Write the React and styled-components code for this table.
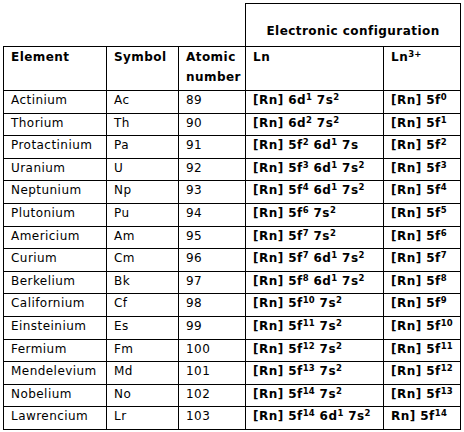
import React from "react";
import styled, { createGlobalStyle } from "styled-components";

const GlobalStyle = createGlobalStyle`
  body {
    margin: 0;
    background: #ffffff;
  }
`;

const Page = styled.div`
  padding: 3px;
  font-family: "DejaVu Sans", Verdana, sans-serif;
  font-size: 12px;
  letter-spacing: 0.45px;
  color: #000;
`;

const Table = styled.table`
  width: 458px;
  table-layout: fixed;
  border-collapse: collapse;
`;

const TopRow = styled.tr`
  height: 43px;
`;

const HeadRow = styled.tr`
  height: 44px;
`;

const Row = styled.tr`
  height: 22.6px;
`;

const Blank = styled.td`
  border: none;
  padding: 0;
`;

const GroupHead = styled.th`
  border: 1px solid #000;
  padding: 0 0 6px;
  text-align: center;
  vertical-align: bottom;
  font-weight: bold;
  line-height: 17px;
`;

const Head = styled.th`
  border: 1px solid #000;
  padding: 0 7px;
  text-align: left;
  vertical-align: top;
  font-weight: bold;
  line-height: 20px;
`;

const Cell = styled.td`
  border: 1px solid #000;
  padding: 1px 7px 0;
  vertical-align: top;
  line-height: 17px;
  white-space: nowrap;
  font-weight: ${(p) => (p.$bold ? "bold" : "normal")};
`;

const Sup = styled.sup`
  font-size: 8.5px;
  line-height: 0;
  vertical-align: 4px;
  letter-spacing: 0.2px;
`;

const rows = [
  ["Actinium", "Ac", 89, "[Rn] 6d1 7s2", "[Rn] 5f0"],
  ["Thorium", "Th", 90, "[Rn] 6d2 7s2", "[Rn] 5f1"],
  ["Protactinium", "Pa", 91, "[Rn] 5f2 6d1 7s", "[Rn] 5f2"],
  ["Uranium", "U", 92, "[Rn] 5f3 6d1 7s2", "[Rn] 5f3"],
  ["Neptunium", "Np", 93, "[Rn] 5f4 6d1 7s2", "[Rn] 5f4"],
  ["Plutonium", "Pu", 94, "[Rn] 5f6 7s2", "[Rn] 5f5"],
  ["Americium", "Am", 95, "[Rn] 5f7 7s2", "[Rn] 5f6"],
  ["Curium", "Cm", 96, "[Rn] 5f7 6d1 7s2", "[Rn] 5f7"],
  ["Berkelium", "Bk", 97, "[Rn] 5f8 6d1 7s2", "[Rn] 5f8"],
  ["Californium", "Cf", 98, "[Rn] 5f10 7s2", "[Rn] 5f9"],
  ["Einsteinium", "Es", 99, "[Rn] 5f11 7s2", "[Rn] 5f10"],
  ["Fermium", "Fm", 100, "[Rn] 5f12 7s2", "[Rn] 5f11"],
  ["Mendelevium", "Md", 101, "[Rn] 5f13 7s2", "[Rn] 5f12"],
  ["Nobelium", "No", 102, "[Rn] 5f14 7s2", "[Rn] 5f13"],
  ["Lawrencium", "Lr", 103, "[Rn] 5f14 6d1 7s2", "Rn] 5f14"],
];

// "5f14" -> 5f with 14 raised; other words stay as they are
function Config({ text }) {
  return text.split(" ").map((word, i) => {
    const m = word.match(/^(\d[spdf])(\d+)$/);
    return (
      <React.Fragment key={i}>
        {i > 0 && " "}
        {m ? (
          <>
            {m[1]}
            <Sup>{m[2]}</Sup>
          </>
        ) : (
          word
        )}
      </React.Fragment>
    );
  });
}

export default function App() {
  return (
    <Page>
      <GlobalStyle />
      <Table>
        <colgroup>
          <col style={{ width: 103 }} />
          <col style={{ width: 72 }} />
          <col style={{ width: 67 }} />
          <col style={{ width: 138 }} />
          <col style={{ width: 77 }} />
        </colgroup>
        <thead>
          <TopRow>
            <Blank colSpan={3} />
            <GroupHead colSpan={2}>Electronic configuration</GroupHead>
          </TopRow>
          <HeadRow>
            <Head>Element</Head>
            <Head>Symbol</Head>
            <Head>Atomic number</Head>
            <Head>Ln</Head>
            <Head>
              Ln<Sup>3+</Sup>
            </Head>
          </HeadRow>
        </thead>
        <tbody>
          {rows.map(([name, sym, num, ln, ion]) => (
            <Row key={name}>
              <Cell>{name}</Cell>
              <Cell>{sym}</Cell>
              <Cell>{num}</Cell>
              <Cell $bold>
                <Config text={ln} />
              </Cell>
              <Cell $bold>
                <Config text={ion} />
              </Cell>
            </Row>
          ))}
        </tbody>
      </Table>
    </Page>
  );
}
